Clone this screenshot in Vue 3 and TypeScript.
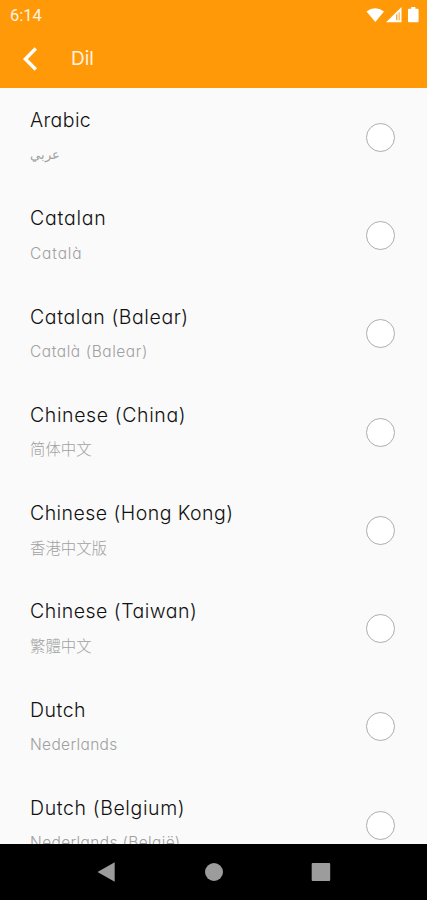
<script setup lang="ts">
interface Language {
  name: string
  native: string
  lang: string
  tracking: number
  nativeTracking: number
}

const languages: Language[] = [
  { name: 'Arabic', native: 'عربي', lang: 'ar', tracking: 0.4, nativeTracking: 0 },
  { name: 'Catalan', native: 'Català', lang: 'ca', tracking: 0.78, nativeTracking: 0.84 },
  { name: 'Catalan (Balear)', native: 'Català (Balear)', lang: 'ca', tracking: 0.6, nativeTracking: 0.56 },
  { name: 'Chinese (China)', native: '简体中文', lang: 'zh-CN', tracking: 0.62, nativeTracking: 0 },
  { name: 'Chinese (Hong Kong)', native: '香港中文版', lang: 'zh-HK', tracking: 0.46, nativeTracking: 0 },
  { name: 'Chinese (Taiwan)', native: '繁體中文', lang: 'zh-TW', tracking: 0.5, nativeTracking: 0 },
  { name: 'Dutch', native: 'Nederlands', lang: 'nl', tracking: 0.5, nativeTracking: 0.34 },
  { name: 'Dutch (Belgium)', native: 'Nederlands (België)', lang: 'nl', tracking: 0.62, nativeTracking: 0.36 },
]
</script>

<template>
  <div class="screen">
    <header class="header">
      <div class="status">
        <span class="clock">6:14</span>
        <svg class="status-icons" width="56" height="18" viewBox="0 0 56 18">
          <path d="M0.5 5.5Q9 -1 18 5.5L9.3 16Z" />
          <path fill-rule="evenodd" d="M20 16.2L35.5 1V16.2ZM30.2 8.800V14.300H31.400V7.400ZM32.700 6.200V14.300H33.600V6.200Z" />
          <path d="M45.2 1h4.2v1.7h2.2q1 0 1 1v11.5q0 1-1 1h-8.6q-1 0-1-1V3.7q0-1 1-1h2.2z" />
        </svg>
      </div>
      <div class="appbar">
        <button class="back" aria-label="Geri">
          <svg width="16" height="24" viewBox="0 0 16 24"><path d="M13.8 1.5L3.400 12L13.800 22.500" /></svg>
        </button>
        <h1 class="title">Dil</h1>
      </div>
    </header>

    <main class="list">
      <div v-for="item in languages" :key="item.name" class="row">
        <div class="labels">
          <span class="name" :style="{ letterSpacing: item.tracking + 'px' }">{{ item.name }}</span>
          <span class="native" :class="item.lang" :lang="item.lang" :style="{ letterSpacing: item.nativeTracking + 'px' }">{{ item.native }}</span>
        </div>
        <span class="radio" role="radio" aria-checked="false"></span>
      </div>
    </main>

    <nav class="nav">
      <svg width="20" height="20" viewBox="0 0 20 20"><path d="M0.5 10L17.7 0.3V19.7Z" /></svg>
      <svg width="20" height="20" viewBox="0 0 20 20"><circle cx="10" cy="10" r="9" /></svg>
      <svg width="20" height="20" viewBox="0 0 20 20"><rect x="0.7" y="0.9" width="18.5" height="18.2" rx="1" /></svg>
    </nav>
  </div>
</template>

<style>
body {
  background: #000;
}
</style>

<style scoped>
.screen {
  display: flex;
  flex-direction: column;
  height: 900px;
  overflow: hidden;
  background: #fafafa;
  font-family: Inter, 'Noto Sans CJK SC', sans-serif;
  font-feature-settings: 'cv11' 1;
}

.header {
  flex: none;
  height: 88px;
  background: #ff9908;
  color: #fff3e0;
}

.status {
  display: flex;
  justify-content: space-between;
  height: 30px;
  padding: 6px 5px 0 10px;
  box-sizing: border-box;
}

.clock {
  font: 450 16.5px/20px Roboto, sans-serif;
}

.status-icons {
  fill: #fff;
}

.appbar {
  display: flex;
  align-items: center;
  height: 57px;
  padding-left: 22px;
}

.back {
  display: flex;
  padding: 0;
  border: 0;
  background: none;
}

.back svg {
  fill: none;
  stroke: #fff;
  stroke-width: 3.4;
}

.title {
  margin: 0 0 0 33px;
  font-size: 19px;
  font-weight: 400;
  line-height: 24px;
}

.list {
  flex: 1;
  min-height: 0;
  overflow: hidden;
}

.row {
  display: flex;
  justify-content: space-between;
  height: 98.3px;
  padding: 0 32px 0 30px;
}

.labels {
  display: flex;
  flex-direction: column;
  align-items: flex-start;
  gap: 13.4px;
  padding-top: 20px;
}

.name {
  color: #111;
  font-size: 19.5px;
  font-weight: 350;
  line-height: 24px;
  white-space: nowrap;
}

.native {
  color: #a0a0a0;
  font-size: 15.5px;
  font-weight: 260;
  line-height: 20px;
  white-space: nowrap;
}

.zh-CN,
.zh-HK,
.zh-TW {
  margin-top: -2px;
  font-family: 'Noto Sans CJK SC', sans-serif;
  font-weight: 300;
  font-size: 15.4px;
}

.zh-HK,
.zh-TW {
  font-family: 'Noto Sans CJK TC', sans-serif;
}

.ar {
  font-family: 'DejaVu Sans', sans-serif;
  font-weight: 200;
  font-size: 12.7px;
}

.radio {
  align-self: center;
  width: 29px;
  height: 29px;
  border: 1px solid #adadad;
  border-radius: 50%;
  box-sizing: border-box;
  background: #fff;
}

.nav {
  display: flex;
  flex: none;
  justify-content: space-between;
  align-items: center;
  height: 56px;
  padding: 0 96px 0 97px;
  box-sizing: border-box;
  background: #000;
  fill: #9c9c9c;
}
</style>
